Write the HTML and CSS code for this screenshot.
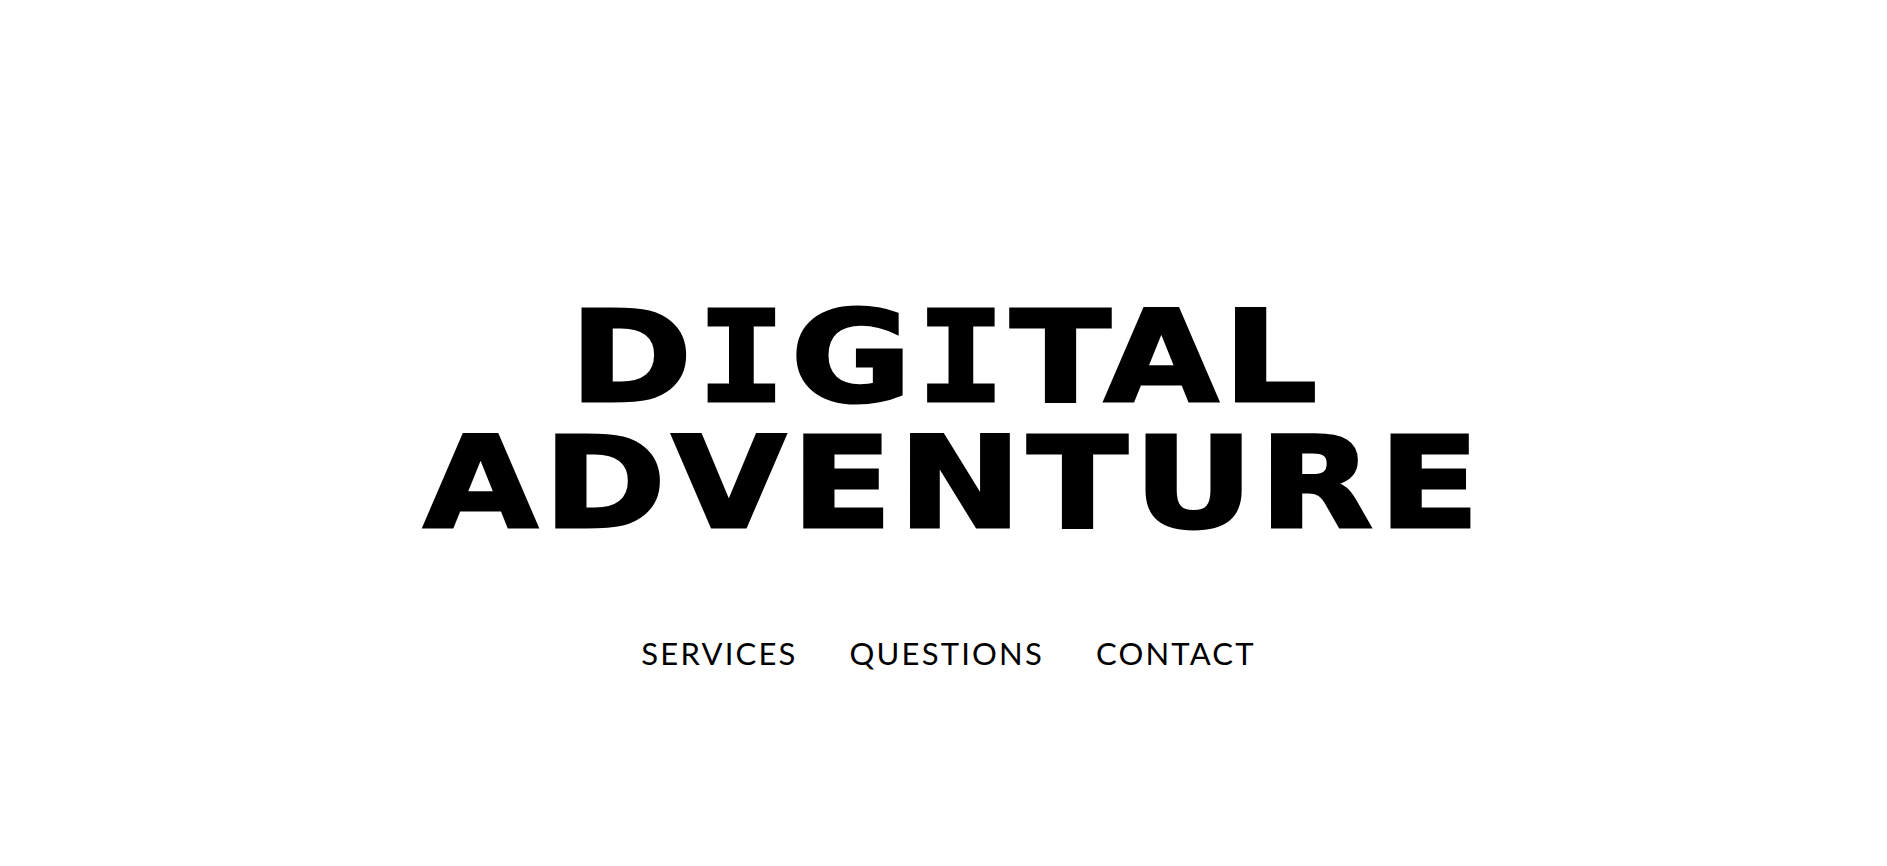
FILE: index.html
```html
<!DOCTYPE html>
<html lang="en">
<head>
<meta charset="utf-8">
<title>Digital Adventure</title>
<link rel="stylesheet" href="styles.css">
</head>
<body>
<main class="hero">
  <h1 class="title">
    <span class="line line-top">D<span class="slab">I</span>G<span class="slab">I</span>TAL</span>
    <span class="line line-bottom">ADVENTURE</span>
  </h1>
  <nav class="nav">
    <a class="nav-link" href="#">SERVICES</a>
    <a class="nav-link" href="#">QUESTIONS</a>
    <a class="nav-link" href="#">CONTACT</a>
  </nav>
</main>
</body>
</html>
```
FILE: styles.css
```css
html, body {
  margin: 0;
  padding: 0;
  background: #ffffff;
}
.hero {
  height: 866px;
  display: flex;
  flex-direction: column;
  align-items: center;
  padding-top: 295px;
  box-sizing: border-box;
}
.title {
  margin: 0;
  font-family: "DejaVu Sans", sans-serif;
  font-weight: 700;
  font-size: 126px;
  line-height: 126px;
  color: #000;
  -webkit-text-stroke: 3px #000;
  display: flex;
  flex-direction: column;
  align-items: center;
}
.line {
  display: block;
  white-space: nowrap;
  transform: scaleX(1.17);
  transform-origin: center;
}
.line-top {
  letter-spacing: 4.2px;
  padding-left: 4px;
}
.line-bottom {
  letter-spacing: 5px;
  padding-left: 19px;
}
.slab {
  font-family: "DejaVu Sans Mono", monospace;
  font-weight: 700;
  line-height: 126px;
}
.nav {
  display: flex;
  gap: 52px;
  margin-top: 87px;
  padding-left: 10px;
}
.nav-link {
  font-family: "Lato", sans-serif;
  font-weight: 400;
  font-size: 31px;
  letter-spacing: 2.2px;
  color: #000;
  text-decoration: none;
}
```
